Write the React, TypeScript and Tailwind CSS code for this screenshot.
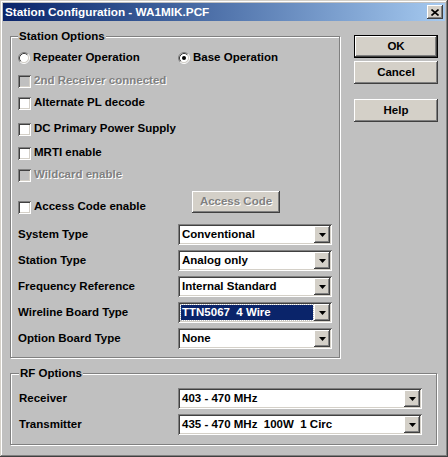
import type { ReactNode } from 'react'

const raised =
  'shadow-[inset_-1px_-1px_0_#404040,inset_1px_1px_0_#fff,inset_-2px_-2px_0_#808080,inset_2px_2px_0_#d4d0c8]'
const sunken =
  'shadow-[inset_1px_1px_0_#808080,inset_-1px_-1px_0_#fff,inset_2px_2px_0_#404040,inset_-2px_-2px_0_#d4d0c8]'
const etched = 'border border-[#808080] shadow-[inset_1px_1px_0_#fff,1px_1px_0_#fff]'
const disabledText = 'text-[#808080] [text-shadow:1px_1px_0_#fff]'

function Checkbox({ label, disabled }: { label: string; disabled?: boolean }) {
  return (
    <div className="flex h-[16px] items-center">
      <span className={`h-[13px] w-[13px] ${sunken} ${disabled ? 'bg-[#c0c0c0]' : 'bg-white'}`} />
      <span className={`ml-[3px] ${disabled ? disabledText : ''}`}>{label}</span>
    </div>
  )
}

function Radio({ label, checked }: { label: string; checked?: boolean }) {
  return (
    <div className="flex h-[16px] items-center">
      <svg width="12" height="12" viewBox="0 0 12 12" aria-hidden>
        <circle cx="6" cy="6" r="4.5" fill="#fff" />
        <path d="M2.11 9.89A5.5 5.5 0 0 1 9.89 2.11" fill="none" stroke="#808080" />
        <path d="M9.89 2.11A5.5 5.5 0 0 1 2.11 9.89" fill="none" stroke="#fff" />
        <path d="M2.82 9.18A4.5 4.5 0 0 1 9.18 2.82" fill="none" stroke="#404040" />
        <path d="M9.18 2.82A4.5 4.5 0 0 1 2.82 9.18" fill="none" stroke="#d4d0c8" />
        {checked && <circle cx="6" cy="6" r="2" fill="#000" />}
      </svg>
      <span className="ml-[3px]">{label}</span>
    </div>
  )
}

function Combo({ value, width, selected }: { value: string; width: string; selected?: boolean }) {
  return (
    <div className={`flex h-[21px] items-center bg-white p-[2px] ${sunken} ${width}`}>
      <div
        className={`ml-[1px] mr-[1px] flex h-[15px] flex-1 items-center pl-[1px] ${
          selected ? 'bg-[#0a246a] text-white outline-1 outline-dotted outline-[#c0c0c0]' : ''
        }`}
      >
        <span className="whitespace-pre">{value}</span>
      </div>
      <div className={`flex h-[17px] w-[16px] items-center justify-center bg-[#d4d0c8] ${raised}`}>
        <svg width="7" height="4" viewBox="0 0 7 4" aria-hidden>
          <path d="M0 0h7L3.5 4z" fill="#000" />
        </svg>
      </div>
    </div>
  )
}

function Row({ label, children, labelWidth }: { label: string; children: ReactNode; labelWidth: string }) {
  return (
    <div className="flex items-center">
      <span className={labelWidth}>{label}</span>
      {children}
    </div>
  )
}

function Button({ children, def }: { children: ReactNode; def?: boolean }) {
  if (def) {
    return (
      <div className="h-[23px] border border-black">
        <div className={`flex h-full items-center justify-center bg-[#d4d0c8] ${raised}`}>{children}</div>
      </div>
    )
  }
  return <div className={`flex h-[23px] items-center justify-center bg-[#d4d0c8] ${raised}`}>{children}</div>
}

export default function App() {
  return (
    <div
      className={`flex h-[457px] w-[448px] flex-col bg-[#c0c0c0] p-[3px] font-['Liberation_Sans',Arial,sans-serif] text-[11.5px] font-bold text-black shadow-[inset_-1px_-1px_0_#404040,inset_1px_1px_0_#d4d0c8,inset_-2px_-2px_0_#808080,inset_2px_2px_0_#fff]`}
    >
      {/* title bar */}
      <div className="flex h-[18px] items-center bg-linear-to-r from-[#0a246a] to-[#a6caf0] pl-[2px] pr-[2px]">
        <span className="flex-1 text-[11.75px] text-white">Station Configuration - WA1MIK.PCF</span>
        <div className={`flex h-[14px] w-[16px] items-center justify-center bg-[#d4d0c8] ${raised}`}>
          <svg width="8" height="7" viewBox="0 0 8 7" aria-hidden>
            <path d="M0.5 0.5L7.5 6.5M7.5 0.5L0.5 6.5" stroke="#000" strokeWidth="1.6" />
          </svg>
        </div>
      </div>

      <div className="flex pl-[7px]">
        <fieldset className={`mt-[8px] h-[329px] w-[329px] px-[7px] ${etched}`}>
          <legend className="h-[14px] bg-[#c0c0c0] px-[1px] leading-[14px]">Station Options</legend>
          <div className="mt-[7px] flex">
            <div className="w-[160px]">
              <Radio label="Repeater Operation" />
            </div>
            <Radio label="Base Operation" checked />
          </div>
          <div className="mt-[7px]">
            <Checkbox label="2nd Receiver connected" disabled />
          </div>
          <div className="mt-[6px]">
            <Checkbox label="Alternate PL decode" />
          </div>
          <div className="mt-[10px]">
            <Checkbox label="DC Primary Power Supply" />
          </div>
          <div className="mt-[8px]">
            <Checkbox label="MRTI enable" />
          </div>
          <div className="mt-[6px]">
            <Checkbox label="Wildcard enable" disabled />
          </div>
          <div className="mt-[8px] flex h-[22px] items-start">
            <div className="mt-[8px] w-[174px]">
              <Checkbox label="Access Code enable" />
            </div>
            <div className={`flex h-[22px] w-[88px] items-center justify-center bg-[#d4d0c8] ${raised}`}>
              <span className={disabledText}>Access Code</span>
            </div>
          </div>
          <div className="mt-[11px] flex flex-col gap-[5px]">
            <Row label="System Type" labelWidth="w-[160px]">
              <Combo value="Conventional" width="w-[154px]" />
            </Row>
            <Row label="Station Type" labelWidth="w-[160px]">
              <Combo value="Analog only" width="w-[154px]" />
            </Row>
            <Row label="Frequency Reference" labelWidth="w-[160px]">
              <Combo value="Internal Standard" width="w-[154px]" />
            </Row>
            <Row label="Wireline Board Type" labelWidth="w-[160px]">
              <Combo value="TTN5067  4 Wire" width="w-[154px]" selected />
            </Row>
            <Row label="Option Board Type" labelWidth="w-[160px]">
              <Combo value="None" width="w-[154px]" />
            </Row>
          </div>
        </fieldset>

        <div className="ml-[14px] mt-[14px] flex w-[84px] flex-col">
          <Button def>OK</Button>
          <div className="mt-[3px]">
            <Button>Cancel</Button>
          </div>
          <div className="mt-[15px]">
            <Button>Help</Button>
          </div>
        </div>
      </div>

      <fieldset className={`ml-[7px] mt-[8px] h-[79px] w-[427px] px-[8px] ${etched}`}>
        <legend className="h-[14px] bg-[#c0c0c0] px-[1px] leading-[14px]">RF Options</legend>
        <div className="mt-[8px] flex flex-col gap-[5px]">
          <Row label="Receiver" labelWidth="w-[159px]">
            <Combo value="403 - 470 MHz" width="w-[244px]" />
          </Row>
          <Row label="Transmitter" labelWidth="w-[159px]">
            <Combo value="435 - 470 MHz  100W  1 Circ" width="w-[244px]" />
          </Row>
        </div>
      </fieldset>
    </div>
  )
}
